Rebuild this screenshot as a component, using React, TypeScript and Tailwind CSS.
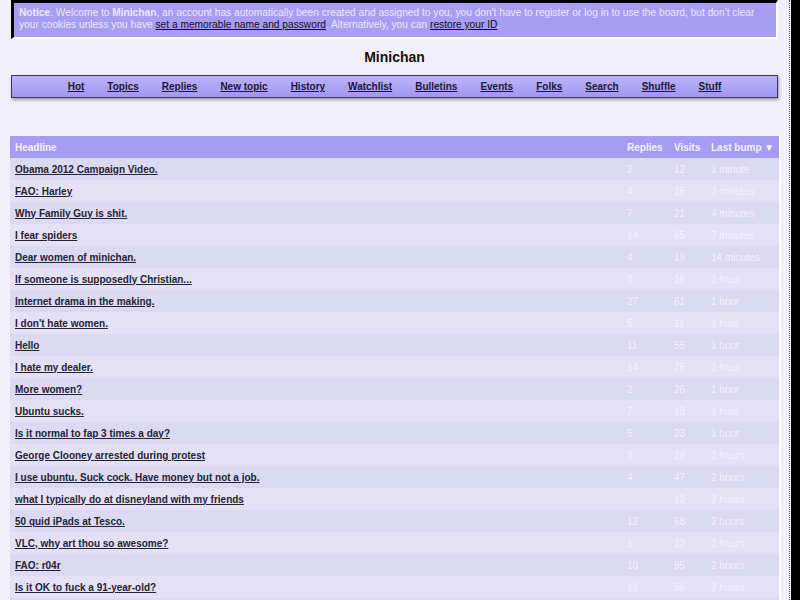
import React from "react";

const nav = ["Hot", "Topics", "Replies", "New topic", "History", "Watchlist", "Bulletins", "Events", "Folks", "Search", "Shuffle", "Stuff"];

const rows: [string, string, string, string][] = [
  ["Obama 2012 Campaign Video.", "2", "12", "1 minute"],
  ["FAO: Harley", "4", "15", "3 minutes"],
  ["Why Family Guy is shit.", "7", "21", "4 minutes"],
  ["I fear spiders", "14", "65", "7 minutes"],
  ["Dear women of minichan.", "4", "19", "14 minutes"],
  ["If someone is supposedly Christian...", "0", "16", "1 hour"],
  ["Internet drama in the making.", "27", "61", "1 hour"],
  ["I don't hate women.", "5", "11", "1 hour"],
  ["Hello", "11", "55", "1 hour"],
  ["I hate my dealer.", "14", "75", "1 hour"],
  ["More women?", "2", "26", "1 hour"],
  ["Ubuntu sucks.", "7", "18", "1 hour"],
  ["Is it normal to fap 3 times a day?", "5", "23", "1 hour"],
  ["George Clooney arrested during protest", "3", "19", "2 hours"],
  ["I use ubuntu. Suck cock. Have money but not a job.", "4", "47", "2 hours"],
  ["what I typically do at disneyland with my friends", "", "12", "2 hours"],
  ["50 quid iPads at Tesco.", "12", "68", "2 hours"],
  ["VLC, why art thou so awesome?", "1", "13", "2 hours"],
  ["FAO: r04r", "10", "95", "2 hours"],
  ["Is it OK to fuck a 91-year-old?", "19", "56", "2 hours"],
];

export default function App() {
  return (
    <div
      className="flex w-[800px] h-[600px] overflow-hidden bg-[#f1effa]"
      style={{ fontFamily: '"Liberation Sans", Arial, sans-serif' }}
    >
      <div className="w-[789px] flex flex-col">
        <div className="ml-[11px] w-[767px] shrink-0 bg-[#a99cf3] border-t-[3px] border-l-[3px] border-black border-r-2 border-b-2 border-r-white border-b-white pl-[5px] pr-[4px] pt-[4px] pb-[6px] text-[10.2px] leading-[12px] text-[#ebe8ff] whitespace-nowrap">
          <b>Notice</b>. Welcome to <b>Minichan</b>, an account has automatically been created and assigned to you, you don't have to register or log in to use the board, but don't clear
          <br />
          your cookies unless you have{" "}
          <a className="text-[#111] underline">set a memorable name and password</a>. Alternatively, you can{" "}
          <a className="text-[#111] underline">restore your ID</a>.
        </div>
        <h1 className="mt-[10px] shrink-0 text-center text-[14px] leading-[17px] font-bold text-[#111]">Minichan</h1>
        <div className="mt-[9px] ml-[11px] w-[767px] h-[23px] shrink-0 border border-[#3a3650] bg-gradient-to-b from-[#bcb3fa] to-[#a396f0] shadow-[1px_2px_3px_rgba(0,0,0,0.35)] flex items-center justify-center gap-[23px]">
          {nav.map((n) => (
            <a key={n} className="text-[10px] font-bold underline text-[#1c1a2e]">{n}</a>
          ))}
        </div>
        <div className="mt-[38px] ml-[10px] w-[771px] shrink-0 border-r-2 border-r-[#fbfaff]">
          <div className="grid grid-cols-[1fr_47px_37px_73px] h-[22px] items-center bg-[#a89bf4] text-[10px] font-bold text-[#f4f2ff]">
            <div className="px-[5px]">Headline</div>
            <div className="px-[5px]">Replies</div>
            <div className="px-[5px]">Visits</div>
            <div className="px-[5px] whitespace-nowrap">Last bump ▼</div>
          </div>
          {rows.map((r, i) => (
            <div
              key={i}
              className={
                "grid grid-cols-[1fr_47px_37px_73px] h-[22px] items-center text-[10px] " +
                (i % 2 === 0 ? "bg-[#dcd9f2]" : "bg-[#e4e1f7]")
              }
            >
              <div className="px-[5px]">
                <a className="font-bold underline text-[#262433]">{r[0]}</a>
              </div>
              <div className="px-[5px] text-[#f3f1fd]">{r[1]}</div>
              <div className="px-[5px] text-[#f3f1fd]">{r[2]}</div>
              <div className="px-[5px] text-[#f3f1fd] whitespace-nowrap">{r[3]}</div>
            </div>
          ))}
          <div className="h-[22px] bg-[#dcd9f2]" />
        </div>
      </div>
      <div className="w-[2px] shrink-0 border-l border-dotted border-[#555]" />
      <div className="flex-1 bg-black" />
    </div>
  );
}
